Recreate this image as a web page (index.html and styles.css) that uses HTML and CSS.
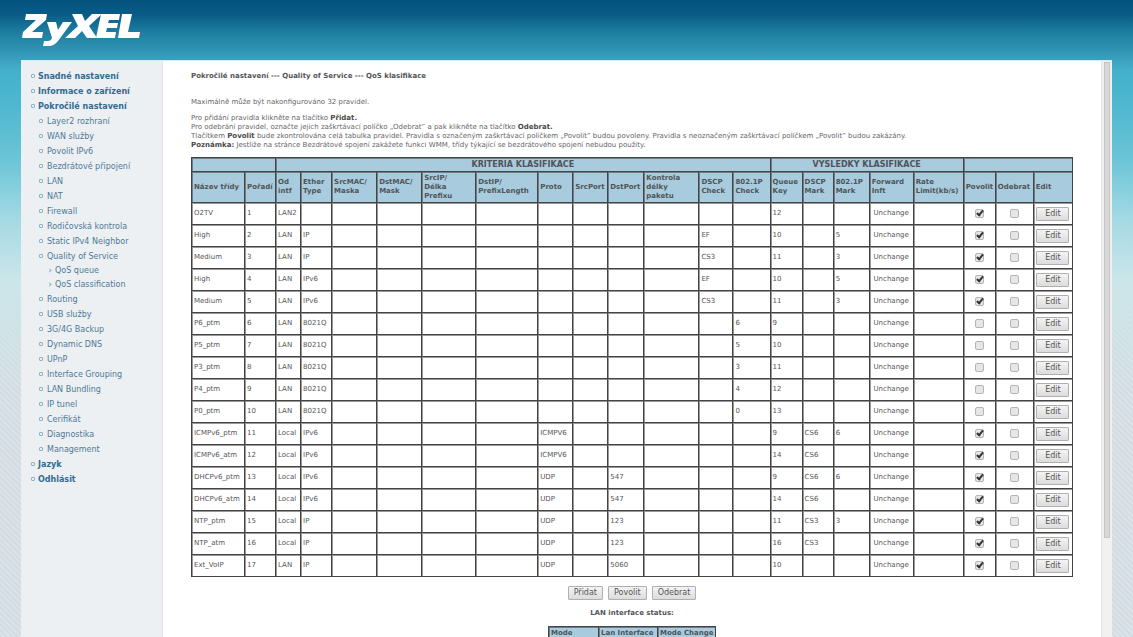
FILE: index.html
```html
<!DOCTYPE html>
<html lang="cs">
<head>
<meta charset="utf-8">
<title>ZyXEL – QoS klasifikace</title>
<link rel="stylesheet" href="styles.css">
</head>
<body>
<header class="header">
<svg class="logo" viewBox="0 0 120 34" role="img" aria-label="ZyXEL">
<path d="M5 1H26L25 7L11 19H22L21 25H1L2 19L15 7H4Z"/>
<path d="M26 9H35L37 17L42 9H51L37 28Q33 33 28 33H22L23 28H27Q30 28 31 25Z"/>
<path d="M51 1H61L64 8L71 1H81L68 13L76 25H66L61 18L54 25H44L57 13Z"/>
<path d="M80 1H99L98 7H88L87 10H97L96 15H86L85 19H95L94 25H75Z"/>
<path d="M101 1H111L107 19H119L118 25H97Z"/>
</svg>
</header>
<div class="frame">
<nav class="side">
<ul class="menu">
<li><a href="#">Snadné nastavení</a></li>
<li><a href="#">Informace o zařízení</a></li>
<li><a href="#">Pokročilé nastavení</a>
<ul class="sub">
<li><a href="#">Layer2 rozhraní</a></li>
<li><a href="#">WAN služby</a></li>
<li><a href="#">Povolit IPv6</a></li>
<li><a href="#">Bezdrátové připojení</a></li>
<li><a href="#">LAN</a></li>
<li><a href="#">NAT</a></li>
<li><a href="#">Firewall</a></li>
<li><a href="#">Rodičovská kontrola</a></li>
<li><a href="#">Static IPv4 Neighbor</a></li>
<li><a href="#">Quality of Service</a>
<ul class="leaf">
<li><a href="#">QoS queue</a></li>
<li><a href="#">QoS classification</a></li>
</ul></li>
<li><a href="#">Routing</a></li>
<li><a href="#">USB služby</a></li>
<li><a href="#">3G/4G Backup</a></li>
<li><a href="#">Dynamic DNS</a></li>
<li><a href="#">UPnP</a></li>
<li><a href="#">Interface Grouping</a></li>
<li><a href="#">LAN Bundling</a></li>
<li><a href="#">IP tunel</a></li>
<li><a href="#">Cerifikát</a></li>
<li><a href="#">Diagnostika</a></li>
<li><a href="#">Management</a></li>
</ul></li>
<li><a href="#">Jazyk</a></li>
<li><a href="#">Odhlásit</a></li>
</ul>
</nav>
<main class="main">
<h1 class="title">Pokročilé nastavení --- Quality of Service --- QoS klasifikace</h1>
<p class="text limit">Maximálně může být nakonfigurováno 32 pravidel.</p>
<p class="text">Pro přidání pravidla klikněte na tlačítko <b>Přidat.</b><br>
Pro odebrání pravidel, označte jejich zaškrtávací políčko „Odebrat” a pak klikněte na tlačítko <b>Odebrat.</b><br>
Tlačítkem <b>Povolit</b> bude zkontrolována celá tabulka pravidel. Pravidla s označeným zaškrtávací políčkem „Povolit” budou povoleny. Pravidla s neoznačeným zaškrtávací políčkem „Povolit” budou zakázány.<br>
<b>Poznámka:</b> Jestliže na stránce Bezdrátové spojení zakážete funkci WMM, třídy týkající se bezdrátového spojení nebudou použity.</p>
<table class="grid rules">
<colgroup><col class="w53"><col class="w31"><col class="w25"><col class="w31"><col class="w45"><col class="w45"><col class="w54"><col class="w62"><col class="w35"><col class="w35"><col class="w36"><col class="w55"><col class="w34"><col class="w37"><col class="w32"><col class="w31"><col class="w36"><col class="w44"><col class="w50"><col class="w32"><col class="w38"><col class="w39"></colgroup>
<thead>
<tr class="groups"><th colspan="2"></th><th colspan="12">KRITERIA KLASIFIKACE</th><th colspan="5">VYSLEDKY KLASIFIKACE</th><th colspan="3"></th></tr>
<tr class="names"><th>Název třídy</th><th>Pořadí</th><th>Od<br>intf</th><th>Ether<br>Type</th><th>SrcMAC/<br>Maska</th><th>DstMAC/<br>Mask</th><th>SrcIP/<br>Délka<br>Prefixu</th><th>DstIP/<br>PrefixLength</th><th>Proto</th><th>SrcPort</th><th>DstPort</th><th>Kontrola<br>délky<br>paketu</th><th>DSCP<br>Check</th><th>802.1P<br>Check</th><th>Queue<br>Key</th><th>DSCP<br>Mark</th><th>802.1P<br>Mark</th><th>Forward<br>Inft</th><th>Rate<br>Limit(kb/s)</th><th>Povolit</th><th>Odebrat</th><th>Edit</th></tr>
</thead>
<tbody id="rules"></tbody>
</table>
<div class="actions"><button type="button">Přidat</button><button type="button">Povolit</button><button type="button">Odebrat</button></div>
<h2 class="status">LAN interface status:</h2>
<table class="grid lan">
<thead><tr><th>Mode</th><th>Lan Interface</th><th>Mode Change</th></tr></thead>
</table>
</main>
<div class="scroll"><div class="thumb"></div></div>
</div>
<script src="rules.js"></script>
</body>
</html>
```
FILE: styles.css
```css
*, *::before { box-sizing: border-box; }
body {
  margin: 0;
  height: 100vh;
  overflow: hidden;
  display: flex;
  flex-direction: column;
  font-family: Verdana, "DejaVu Sans", sans-serif;
  font-size: 7px;
  color: #555;
  background:
    linear-gradient(#02527d 0, #0a5c86 15px, #1b7a9e 30px, #3a9fbe 59px, #43b1cb 70px, #50b9d0 110px, #6cc5d7 160px, #a5d9e4 220px, #cbe6e9 280px, rgba(212,221,227,0) 400px),
    repeating-linear-gradient(45deg, #d3dbe3 0 2px, #dbe2e8 2px 4px);
}
.header { flex: none; height: 60px; padding: 13px 21px; }
.logo { display: block; width: 120px; height: 34px; fill: #fff; }
.frame {
  flex: 1;
  min-height: 0;
  margin: 0 21px;
  display: flex;
  background: #fff;
  border-top: 1px solid #d3edf2;
}
.side {
  flex: none;
  width: 142px;
  padding: 8px 0 0 10px;
  background: #ecf0f3;
  border-right: 1px solid #dfe2f0;
}
.menu, .menu ul { list-style: none; margin: 0; padding: 0; }
.menu { font-size: 8px; line-height: 15px; font-weight: bold; }
.menu .sub { padding-left: 8px; font-weight: normal; }
.menu .leaf { padding-left: 9px; line-height: 14px; }
.menu a { display: flex; align-items: center; gap: 3px; color: #326b90; text-decoration: none; white-space: nowrap; }
.menu .sub a { gap: 4px; color: #4f7995; }
.menu a::before { content: ""; width: 4px; height: 4px; margin-bottom: 2px; border: 1px solid #8db2c6; border-radius: 1px; }
.menu .leaf a::before { width: 3px; height: 3px; border-width: 1px 1px 0 0; border-radius: 0; transform: rotate(45deg); }
.main { flex: 1; min-width: 0; padding: 10px 28px 0; overflow: hidden; }
.title { margin: 0 0 17px; font-size: 7px; line-height: 10px; }
.text { margin: 0 0 7px; line-height: 9px; white-space: nowrap; color: #666; }
.text b { color: #4a4a4a; }
.grid { border-collapse: collapse; table-layout: fixed; line-height: 9px; border: 1px solid #444; }
.grid th, .grid td { border: 1px solid #444; padding: 0 2px; text-align: left; white-space: nowrap; box-shadow: inset 1px 1px #999; }
.grid th { background: #a8cbde; color: #505458; box-shadow: inset 1px 1px #6b7e89; }
.rules { width: 100%; }
.groups { height: 14px; font-size: 8px; }
.grid .groups th { text-align: center; }
.names { height: 31px; }
.rules tbody tr { height: 22px; }
.grid td.mid { text-align: center; padding: 0; }
.w25 { width: 25px; } .w31 { width: 31px; } .w32 { width: 32px; } .w34 { width: 34px; }
.w35 { width: 35px; } .w36 { width: 36px; } .w37 { width: 37px; } .w38 { width: 38px; }
.w39 { width: 39px; } .w44 { width: 44px; } .w45 { width: 45px; } .w50 { width: 50px; }
.w53 { width: 53px; } .w54 { width: 54px; } .w55 { width: 55px; } .w62 { width: 62px; }
button {
  height: 14px;
  padding: 0 5px;
  font: 8px/12px Verdana, "DejaVu Sans", sans-serif;
  color: #555;
  border: 1px solid #b0b0b0;
  border-radius: 1px;
  background: linear-gradient(#f4f4f4, #dcdcdc);
}
td button { display: block; width: 33px; margin: 0 auto; padding: 0; }
input[type="checkbox"] {
  appearance: none;
  display: block;
  width: 9px;
  height: 9px;
  margin: 0 auto;
  border: 1px solid #b5b5b5;
  border-radius: 2px;
  background: #e6e6e6;
}
input[type="checkbox"]:checked::before {
  content: "";
  display: block;
  width: 4px;
  height: 7px;
  margin: -1px 0 0 2px;
  border: solid #333;
  border-width: 0 2px 2px 0;
  transform: rotate(40deg);
}
.actions { display: flex; justify-content: center; gap: 5px; margin: 9px 0; }
.status { margin: 0 0 8px; font-size: 7px; line-height: 9px; text-align: center; }
.lan { width: 168px; margin: 0 auto; }
.lan th { height: 14px; }
.lan th:first-child { width: 50px; }
.lan th:last-child { width: 58px; }
.scroll { flex: none; width: 11px; padding: 1px 2px; background: #f1f1f1; border-left: 1px solid #e2e2e2; }
.thumb { height: 83%; background: #d8d8d8; border: 1px solid #c4c4c4; }
```
FILE: rules.js
```js
// name, order, interface, ether type, protocol, dst port, DSCP check, 802.1P check, queue, DSCP mark, 802.1P mark, enabled
const rules = [
  ["O2TV", 1, "LAN2", "", "", "", "", "", 12, "", "", 1],
  ["High", 2, "LAN", "IP", "", "", "EF", "", 10, "", 5, 1],
  ["Medium", 3, "LAN", "IP", "", "", "CS3", "", 11, "", 3, 1],
  ["High", 4, "LAN", "IPv6", "", "", "EF", "", 10, "", 5, 1],
  ["Medium", 5, "LAN", "IPv6", "", "", "CS3", "", 11, "", 3, 1],
  ["P6_ptm", 6, "LAN", "8021Q", "", "", "", 6, 9, "", "", 0],
  ["P5_ptm", 7, "LAN", "8021Q", "", "", "", 5, 10, "", "", 0],
  ["P3_ptm", 8, "LAN", "8021Q", "", "", "", 3, 11, "", "", 0],
  ["P4_ptm", 9, "LAN", "8021Q", "", "", "", 4, 12, "", "", 0],
  ["P0_ptm", 10, "LAN", "8021Q", "", "", "", 0, 13, "", "", 0],
  ["ICMPv6_ptm", 11, "Local", "IPv6", "ICMPV6", "", "", "", 9, "CS6", 6, 1],
  ["ICMPv6_atm", 12, "Local", "IPv6", "ICMPV6", "", "", "", 14, "CS6", "", 1],
  ["DHCPv6_ptm", 13, "Local", "IPv6", "UDP", 547, "", "", 9, "CS6", 6, 1],
  ["DHCPv6_atm", 14, "Local", "IPv6", "UDP", 547, "", "", 14, "CS6", "", 1],
  ["NTP_ptm", 15, "Local", "IP", "UDP", 123, "", "", 11, "CS3", 3, 1],
  ["NTP_atm", 16, "Local", "IP", "UDP", 123, "", "", 16, "CS3", "", 1],
  ["Ext_VoIP", 17, "LAN", "IP", "UDP", 5060, "", "", 10, "", "", 1]
];
document.getElementById("rules").innerHTML = rules.map(r => {
  const cells = [r[0], r[1], r[2], r[3], "", "", "", "", r[4], "", r[5], "", r[6], r[7], r[8], r[9], r[10]];
  return "<tr>" + cells.map(c => `<td>${c}</td>`).join("") +
    `<td class="mid">Unchange</td><td></td>` +
    `<td class="mid"><input type="checkbox" aria-label="Povolit ${r[0]}"${r[11] ? " checked" : ""}></td>` +
    `<td class="mid"><input type="checkbox" aria-label="Odebrat ${r[0]}"></td>` +
    `<td class="mid"><button type="button">Edit</button></td></tr>`;
}).join("");
```
